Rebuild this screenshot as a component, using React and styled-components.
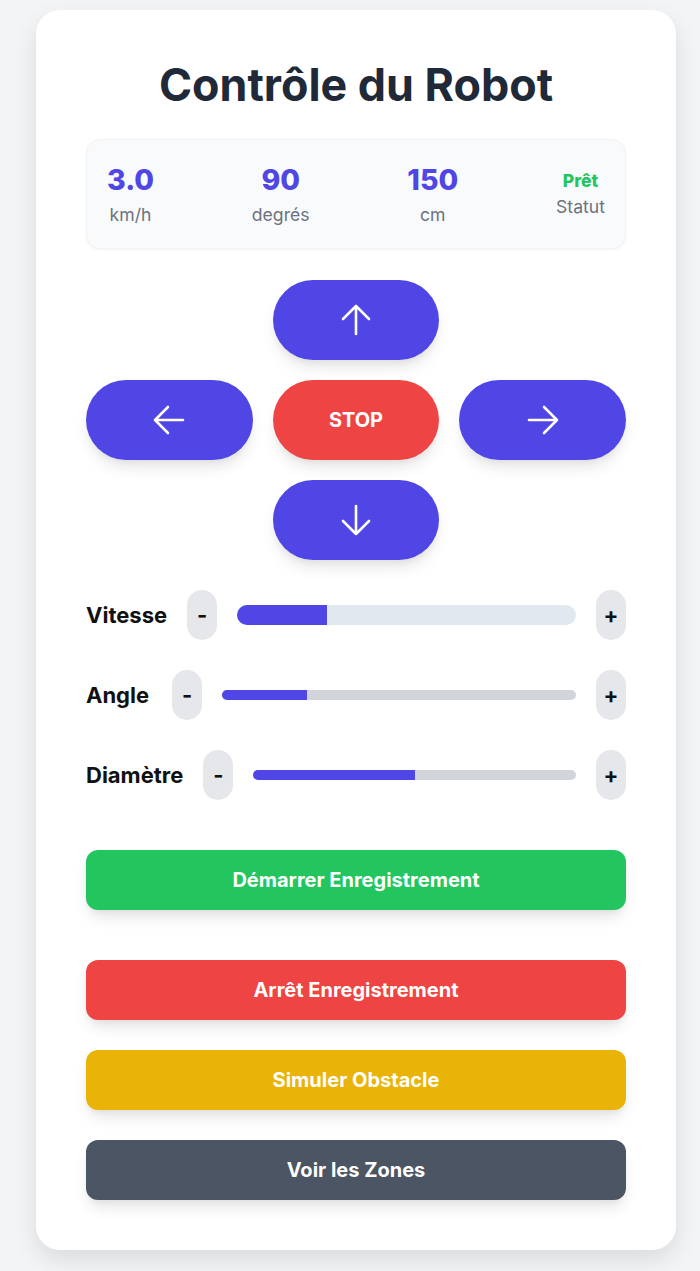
import React from 'react'
import styled, { createGlobalStyle } from 'styled-components'

const GlobalStyle = createGlobalStyle`
  * { box-sizing: border-box; }
  body {
    margin: 0;
    background: #f3f4f6;
    font-family: Inter, "Liberation Sans", sans-serif;
  }
`

const Page = styled.div`
  padding: 10px 24px 21px 36px;
`

const Card = styled.div`
  width: 640px;
  background: #ffffff;
  border-radius: 24px;
  padding: 50px;
  box-shadow: 0 10px 25px rgba(0, 0, 0, 0.1);
`

const Title = styled.h1`
  margin: 0 0 29px;
  text-align: center;
  font-size: 44.8px;
  line-height: 50px;
  font-weight: 700;
  color: #1f2937;
`

const Stats = styled.div`
  display: flex;
  justify-content: space-between;
  align-items: center;
  height: 110px;
  padding: 0 20px;
  background: #f9fafb;
  border: 1px solid #f1f3f5;
  border-radius: 14px;
  box-shadow: 0 1px 3px rgba(0, 0, 0, 0.04);
`

const Stat = styled.div`
  display: flex;
  flex-direction: column;
  align-items: center;
  gap: ${p => (p.$small ? '6px' : '9px')};
`

const StatValue = styled.div`
  font-size: ${p => (p.$small ? '17.5px' : '28.5px')};
  line-height: ${p => (p.$small ? '20px' : '32px')};
  font-weight: 800;
  color: ${p => p.$color || '#4f46e5'};
`

const StatLabel = styled.div`
  font-size: 17.6px;
  line-height: 20px;
  color: #6b7280;
`

const Pad = styled.div`
  display: grid;
  grid-template-columns: repeat(3, 1fr);
  grid-auto-rows: 80px;
  gap: 20px;
  margin: 31px 0 30px;
`

const PadButton = styled.button`
  grid-column: ${p => p.$col};
  border: none;
  border-radius: 40px;
  background: ${p => (p.$stop ? '#ef4444' : '#4f46e5')};
  color: #ffffff;
  font-family: inherit;
  font-size: 20px;
  font-weight: 700;
  display: flex;
  align-items: center;
  justify-content: center;
  box-shadow: 0 10px 15px -3px rgba(0, 0, 0, 0.1), 0 4px 6px -2px rgba(0, 0, 0, 0.05);
`

const Sliders = styled.div`
  display: flex;
  flex-direction: column;
  gap: 30px;
  margin-bottom: 50px;
`

const SliderRow = styled.div`
  display: flex;
  align-items: center;
  gap: 20px;
  height: 50px;
`

const SliderLabel = styled.span`
  font-size: 22px;
  font-weight: 700;
  color: #111111;
  margin-right: ${p => p.$extra || 0}px;
`

const StepButton = styled.button`
  flex: none;
  width: 30px;
  height: 50px;
  border: none;
  border-radius: 15px;
  background: #e5e7eb;
  font-family: inherit;
  font-size: 22px;
  font-weight: 700;
  color: #111111;
  padding: 0;
`

const Track = styled.div`
  flex: 1;
  height: ${p => (p.$thick ? '20px' : '10px')};
  border-radius: 10px;
  background: ${p => (p.$thick ? '#e2e8f0' : '#d1d5db')};
  overflow: hidden;
  display: flex;
`

const Fill = styled.div`
  height: 100%;
  background: #4f46e5;
`

const Actions = styled.div`
  display: flex;
  flex-direction: column;
  gap: 30px;
`

const ActionButton = styled.button`
  height: 60px;
  border: none;
  border-radius: 12px;
  background: ${p => p.$bg};
  color: #ffffff;
  font-family: inherit;
  font-size: 20px;
  font-weight: 700;
  margin-bottom: ${p => p.$after || 0}px;
  box-shadow: 0 10px 15px -3px rgba(0, 0, 0, 0.1), 0 4px 6px -2px rgba(0, 0, 0, 0.05);
`

const Arrow = ({ rotate }) => (
  <svg width="34" height="34" viewBox="0 0 34 34" style={{ transform: `rotate(${rotate}deg)` }}>
    <path
      d="M17 31V3M4 16L17 3l13 13"
      fill="none"
      stroke="#ffffff"
      strokeWidth="2.6"
      strokeLinecap="round"
      strokeLinejoin="round"
    />
  </svg>
)

const sliders = [
  { label: 'Vitesse', pct: 26.4, thick: true },
  { label: 'Angle', pct: 24, extra: 3 },
  { label: 'Diamètre', pct: 50 }
]

const actions = [
  { text: 'Démarrer Enregistrement', bg: '#22c55e', after: 20 },
  { text: 'Arrêt Enregistrement', bg: '#ef4444' },
  { text: 'Simuler Obstacle', bg: '#eab308' },
  { text: 'Voir les Zones', bg: '#4b5563' }
]

export default function App() {
  return (
    <Page>
      <GlobalStyle />
      <Card>
        <Title>Contrôle du Robot</Title>

        <Stats>
          <Stat>
            <StatValue>3.0</StatValue>
            <StatLabel>km/h</StatLabel>
          </Stat>
          <Stat>
            <StatValue>90</StatValue>
            <StatLabel>degrés</StatLabel>
          </Stat>
          <Stat>
            <StatValue>150</StatValue>
            <StatLabel>cm</StatLabel>
          </Stat>
          <Stat $small>
            <StatValue $small $color="#22c55e">Prêt</StatValue>
            <StatLabel>Statut</StatLabel>
          </Stat>
        </Stats>

        <Pad>
          <PadButton $col="2"><Arrow rotate={0} /></PadButton>
          <PadButton $col="1"><Arrow rotate={-90} /></PadButton>
          <PadButton $col="2" $stop>STOP</PadButton>
          <PadButton $col="3"><Arrow rotate={90} /></PadButton>
          <PadButton $col="2"><Arrow rotate={180} /></PadButton>
        </Pad>

        <Sliders>
          {sliders.map(s => (
            <SliderRow key={s.label}>
              <SliderLabel $extra={s.extra}>{s.label}</SliderLabel>
              <StepButton>-</StepButton>
              <Track $thick={s.thick}>
                <Fill style={{ width: `${s.pct}%` }} />
              </Track>
              <StepButton>+</StepButton>
            </SliderRow>
          ))}
        </Sliders>

        <Actions>
          {actions.map(a => (
            <ActionButton key={a.text} $bg={a.bg} $after={a.after}>
              {a.text}
            </ActionButton>
          ))}
        </Actions>
      </Card>
    </Page>
  )
}
